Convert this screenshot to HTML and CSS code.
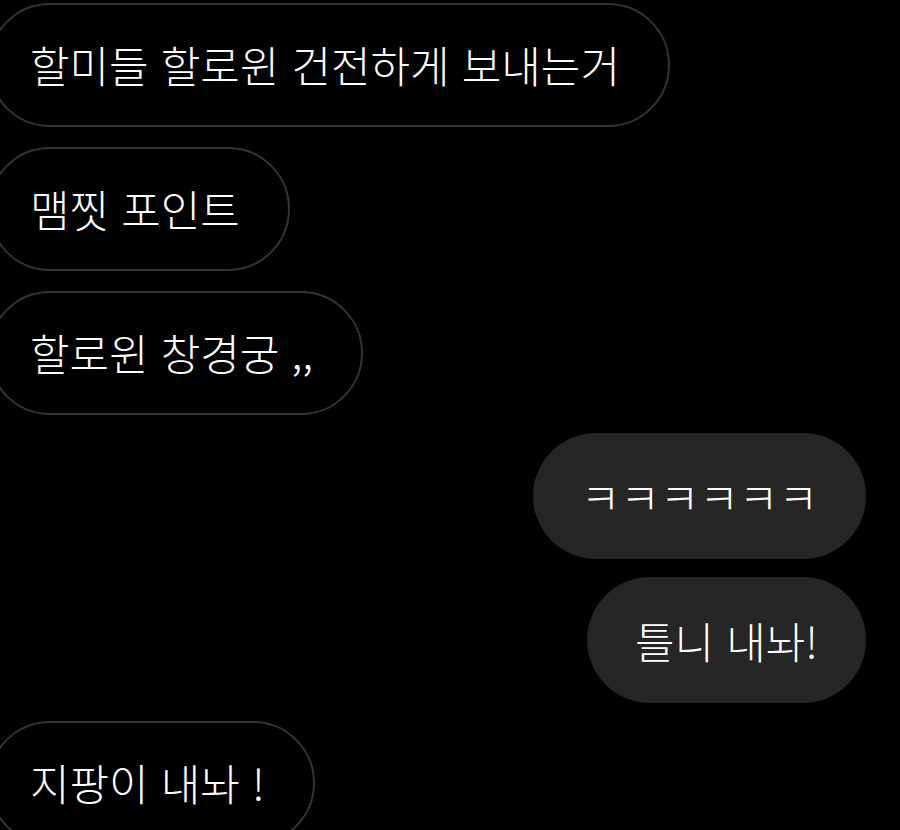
FILE: index.html
```html
<!DOCTYPE html>
<html lang="ko">
<head>
<meta charset="utf-8">
<link rel="stylesheet" href="styles.css">
</head>
<body>
<div class="chat">
  <div class="msg in"><span class="bubble">할미들 할로윈 건전하게 보내는거</span></div>
  <div class="msg in"><span class="bubble">맴찟 포인트</span></div>
  <div class="msg in"><span class="bubble">할로윈 창경궁 ,,</span></div>
  <div class="msg out"><span class="bubble">ㅋㅋㅋㅋㅋㅋ</span></div>
  <div class="msg out"><span class="bubble">틀니 내놔!</span></div>
  <div class="msg in"><span class="bubble">지팡이 내놔 !</span></div>
</div>
</body>
</html>
```
FILE: styles.css
```css
html, body {
  margin: 0;
  padding: 0;
  background: #000;
  overflow: hidden;
}
.chat {
  display: flex;
  flex-direction: column;
  gap: 18px;
  padding-top: 3px;
  font-family: "Noto Sans CJK KR", "Noto Sans", sans-serif;
  font-size: 43px;
  font-weight: 300;
  color: #fff;
}
.msg {
  display: flex;
}
.msg.in {
  justify-content: flex-start;
  margin-left: -12px;
}
.msg.in + .msg.in {
  margin-top: 2px;
}
.msg.out {
  justify-content: flex-end;
  margin-right: 34px;
}
.bubble {
  box-sizing: border-box;
  height: 124px;
  display: flex;
  align-items: center;
  border-radius: 62px;
  white-space: nowrap;
  line-height: 1;
}
.in .bubble {
  border: 2px solid #333;
  padding: 0 48px 2px 40px;
}
.out .bubble {
  background: #262626;
  height: 126px;
  border-radius: 63px;
  padding: 0 48px;
}
```
